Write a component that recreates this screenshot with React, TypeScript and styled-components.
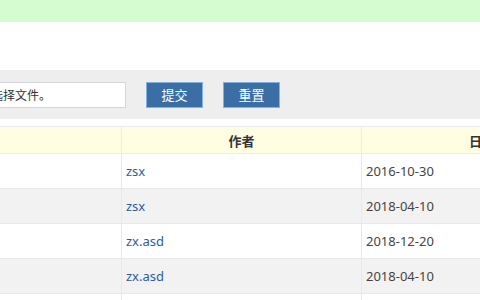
import React from 'react'
import styled, { createGlobalStyle } from 'styled-components';

const GlobalStyle = createGlobalStyle`
    html, body {
        margin: 0;
        padding: 0;
        background: #ffffff;
        overflow: hidden;
    }
    body {
        font-family: "Noto Sans", "Noto Sans CJK SC", sans-serif;
        color: #333;
    }
`;

const TopBar = styled.div`
    height: 22px;
    background: #d4fcd0;
`;

const Banner = styled.div`
    height: 48px;
    background: #ffffff;
`;

// the screenshot is taken of a wider page, scrolled sideways
const Content = styled.div`
    margin-left: -240px;
    width: 1000px;
`;

const Toolbar = styled.div`
    height: 49px;
    background: #eeeeee;
    display: flex;
    align-items: center;
    padding-left: 180px;
`;

const FileBox = styled.div`
    box-sizing: border-box;
    width: 186px;
    height: 26px;
    background: #fff;
    border: 1px solid #d6d6d6;
    display: flex;
    align-items: center;
    padding-left: 38px;
    font-size: 12px;
    color: #333;
    white-space: nowrap;
`;

const Button = styled.button`
    box-sizing: border-box;
    width: 57px;
    height: 26px;
    margin-left: 20px;
    background: #3a6ea5;
    border: 1px solid #7fb1e2;
    color: #fff;
    font-family: "Noto Sans", "Noto Sans CJK SC", sans-serif;
    font-size: 13px;
    padding: 0;
    cursor: pointer;
`;

const Table = styled.table`
    margin-top: 7px;
    border-collapse: collapse;
    table-layout: fixed;
    width: 839px;
    font-size: 13px;
`;

const HeadCell = styled.th<{ width: number }>`
    width: ${props => props.width}px;
    height: 26px;
    padding: 0;
    background: #fffde2;
    border: 1px solid #ebebeb;
    font-weight: bold;
    color: #333;
    text-align: center;
`;

const Row = styled.tr<{ striped: boolean }>`
    background: ${props => props.striped ? '#f2f2f2' : '#ffffff'};
`;

const Cell = styled.td`
    height: 34px;
    padding: 0 4px;
    border: 1px solid #e8e8e8;
    color: #444;
    white-space: nowrap;
    overflow: hidden;
`;

const Author = styled.a`
    color: #2b5d9d;
    text-decoration: none;
`;

const files = [
    { name: 'a.txt', author: 'zsx', date: '2016-10-30' },
    { name: 'b.doc', author: 'zsx', date: '2018-04-10' },
    { name: 'c.pdf', author: 'zx.asd', date: '2018-12-20' },
    { name: 'd.xls', author: 'zx.asd', date: '2018-04-10' },
    { name: 'e.zip', author: 'zsx', date: '2018-05-02' },
];

export default function App() {
    return <div>
        <GlobalStyle />
        <TopBar />
        <Banner />
        <Content>
            <Toolbar>
                <FileBox>未选择文件。</FileBox>
                <Button>提交</Button>
                <Button>重置</Button>
            </Toolbar>
            <Table>
                <thead>
                    <tr>
                        <HeadCell width={360}>文件名</HeadCell>
                        <HeadCell width={239}>作者</HeadCell>
                        <HeadCell width={240}>日期</HeadCell>
                    </tr>
                </thead>
                <tbody>
                    {files.map((f, i) =>
                        <Row key={i} striped={i % 2 === 1}>
                            <Cell>{f.name}</Cell>
                            <Cell><Author href="#">{f.author}</Author></Cell>
                            <Cell>{f.date}</Cell>
                        </Row>
                    )}
                </tbody>
            </Table>
        </Content>
    </div>
}
